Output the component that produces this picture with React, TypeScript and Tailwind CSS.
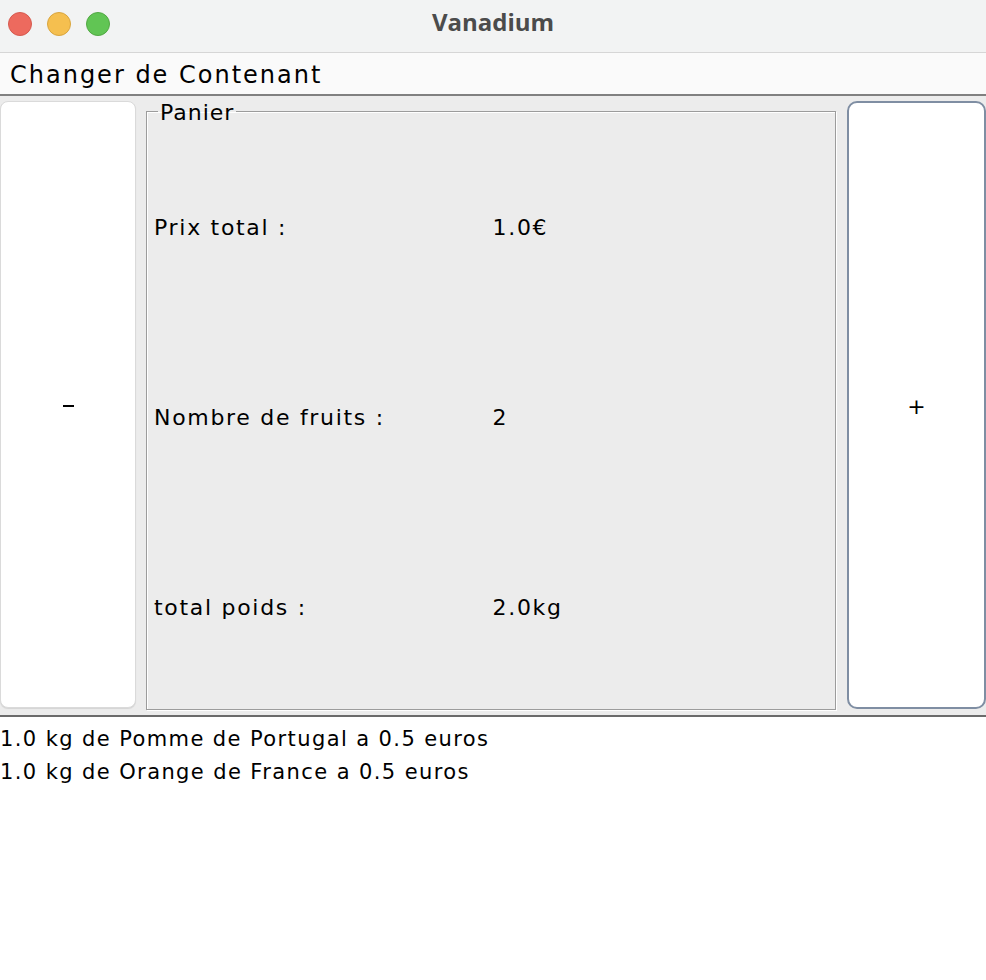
export default function App() {
  const rows = [
    { label: "Prix total :", value: "1.0€" },
    { label: "Nombre de fruits :", value: "2" },
    { label: "total poids :", value: "2.0kg" },
  ];
  const items = [
    "1.0 kg de Pomme de Portugal a 0.5 euros",
    "1.0 kg de Orange de France a 0.5 euros",
  ];

  return (
    <div className="w-[986px] h-[980px] bg-white text-black overflow-hidden font-['DejaVu_Sans',sans-serif]">
      {/* Title bar */}
      <div className="relative h-[53px] bg-[#f2f3f3] border-b border-[#d6d6d6] flex items-center">
        <div className="flex items-center gap-[15px] pl-[8px] pb-[5px]">
          <span className="w-[24px] h-[24px] rounded-full bg-[#ed6a5e] border border-[#d65a4f]" />
          <span className="w-[24px] h-[24px] rounded-full bg-[#f5bf4f] border border-[#d9a53e]" />
          <span className="w-[24px] h-[24px] rounded-full bg-[#61c554] border border-[#52a843]" />
        </div>
        <div className="absolute inset-0 flex items-center justify-center pb-[8px]">
          <span className="text-[24px] font-bold text-[#4b4b4b] font-['Open_Sans',sans-serif]">Vanadium</span>
        </div>
      </div>

      {/* Menu bar */}
      <div className="h-[43px] bg-[#fafafa] border-b-2 border-[#808080] flex items-center pl-[10px]">
        <span className="text-[24px] leading-none tracking-[2px] pt-[2px]">Changer de Contenant</span>
      </div>

      {/* Main panel */}
      <div className="h-[619px] bg-[#ececec] flex gap-[10px] pt-[5px]">
        <button className="w-[136px] h-[607px] bg-white rounded-[8px] border border-[#dadada] shadow-[0_1px_1px_rgba(0,0,0,0.1)] flex items-center justify-center text-[22px] pt-[2px]">
          <span className="block w-[11px] h-[2px] bg-black" />
        </button>

        <fieldset className="w-[690px] h-[611px] mt-[-2px] border border-[#9c9c9c] shadow-[1px_1px_0_#ffffff,inset_1px_1px_0_#ffffff] pl-[7px] pr-[4px]">
          <legend className="ml-[4px] px-[2px] text-[22px] leading-[24px] tracking-[1px]">
            <span className="relative top-[2px]">Panier</span>
          </legend>
          <div className="grid grid-cols-2 grid-rows-3 h-[570px] mt-[9px] text-[22px] tracking-[1.7px]">
            {rows.map((r) => (
              <div key={r.label} className="contents">
                <div className="flex items-center">{r.label}</div>
                <div className="flex items-center">{r.value}</div>
              </div>
            ))}
          </div>
        </fieldset>

        <button className="w-[139px] h-[608px] ml-[1px] bg-white rounded-[10px] border-2 border-[#7f8ea3] flex items-center justify-center text-[22px] pt-[2px]">
          +
        </button>
      </div>

      {/* List */}
      <div className="border-t-2 border-[#6b6b6b] pt-[6px]">
        {items.map((t) => (
          <div key={t} className="h-[33px] text-[21px] leading-[33px] tracking-[1.4px]">
            {t}
          </div>
        ))}
      </div>
    </div>
  );
}
